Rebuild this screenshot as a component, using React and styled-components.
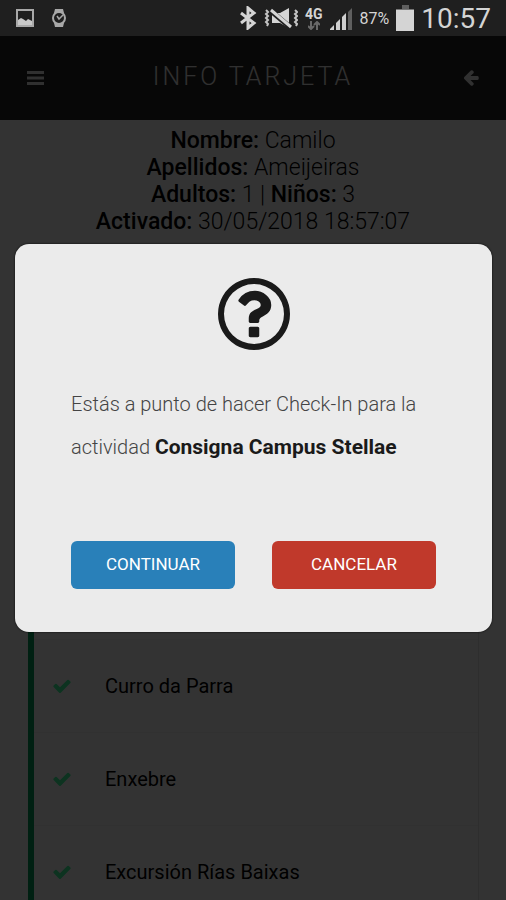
import React, { useState } from "react";
import styled, { createGlobalStyle } from "styled-components";

const activities = ["Curro da Parra", "Enxebre", "Excursión Rías Baixas"];

function StatusIcons() {
  return (
    <>
      {/* bluetooth */}
      <svg width="18" height="24" viewBox="0 0 18 24">
        <path
          d="M2 7 L15 17 L9 22 V2 L15 7 L2 17"
          fill="none"
          stroke="#d4d4d4"
          strokeWidth="3"
        />
      </svg>
      {/* vibrate + mute */}
      <svg width="34" height="22" viewBox="0 0 34 22">
        <path
          d="M2 3l2 2-2 2 2 2-2 2 2 2-2 2 2 2-1 2M31 3l2 2-2 2 2 2-2 2 2 2-2 2 2 2-1 2"
          fill="none"
          stroke="#c4c4c4"
          strokeWidth="2"
        />
        <path d="M8 6h8l9-5v20l-9-5H8z" fill="#d4d4d4" />
        <path d="M7 4l20 17" stroke="#1f1f1f" strokeWidth="5" />
        <path d="M7 3l20 17" stroke="#d4d4d4" strokeWidth="3" />
      </svg>
    </>
  );
}

function CheckIcon() {
  return (
    <svg width="20" height="20" viewBox="0 0 1792 1792" fill="currentColor">
      <path d="M1671 566q0 40-28 68l-724 724-136 136q-28 28-68 28t-68-28l-136-136-362-362q-28-28-28-68t28-68l136-136q28-28 68-28t68 28l294 295 656-657q28-28 68-28t68 28l136 136q28 28 28 68z" />
    </svg>
  );
}

function QuestionIcon() {
  return (
    <svg width="72" height="72" viewBox="128 128 1536 1536" fill="#1a1a1a">
      <path d="M1008 1200v160q0 14-9 23t-23 9h-160q-14 0-23-9t-9-23v-160q0-14 9-23t23-9h160q14 0 23 9t9 23zm256-496q0 50-15 90t-45.500 69-52 44-59.500 36q-32 18-46.500 28t-26 24-11.500 29v32q0 14-9 23t-23 9h-160q-14 0-23-9t-9-23v-68q0-35 10.500-64.500t24-47.500 39-35.500 41-25.500 44.500-21q53-25 75-43t22-49q0-42-43.500-71.500t-95.500-29.500q-56 0-95 27-29 20-80 83-9 12-25 12-11 0-19-6l-108-82q-10-7-12-20t5-23q122-192 349-192 129 0 238.500 89.500t109.500 214.500zm-368-448q-130 0-248.500 51t-204 136.500-136.500 204-51 248.500 51 248.500 136.500 204 204 136.500 248.500 51 248.500-51 204-136.500 136.500-204 51-248.500-51-248.500-136.500-204-204-136.500-248.500-51zm768 640q0 209-103 385.500t-279.500 279.500-385.500 103-385.500-103-279.500-279.500-103-385.500 103-385.500 279.500-279.500 385.500-103 385.500 103 279.500 279.500 103 385.500z" />
    </svg>
  );
}

function App() {
  const [open, setOpen] = useState(true);

  const onClose = () => setOpen(false);

  return (
    <Phone>
      <GlobalStyle />
      <StatusBar>
        <StatusLeft>
          <svg width="18" height="18" viewBox="0 0 18 18">
            <rect x="1" y="1" width="16" height="16" fill="none" stroke="#a8a8a8" strokeWidth="2" />
            <path d="M2 16v-5l3-2 2 1 3 2 2-2 4 2v4z" fill="#c8c8c8" />
          </svg>
          <svg width="16" height="20" viewBox="0 0 16 20">
            <path d="M4 1h8l1 4H3zM4 19h8l1-4H3z" fill="#a8a8a8" />
            <circle cx="8" cy="10" r="6" fill="#1f1f1f" stroke="#a8a8a8" strokeWidth="2" />
            <path d="M6 8l2 3 4-4" fill="none" stroke="#a8a8a8" strokeWidth="1.5" />
          </svg>
        </StatusLeft>
        <StatusRight>
          <StatusIcons />
          <Network>
            <span>4G</span>
            <svg width="12" height="9" viewBox="0 0 12 9">
              <path
                d="M3 0v8M0 5l3 3 3-3M9 9V1M6 4l3-3 3 3"
                fill="none"
                stroke="#6a6a6a"
                strokeWidth="2"
              />
            </svg>
          </Network>
          <svg width="23" height="23" viewBox="0 0 23 23">
            <path d="M0 23v-1l4-4v5zM6 16l4-4v11H6zM12 10l4-4v17h-4z" fill="#cfcfcf" />
            <path d="M18 5l4-4v22h-4z" fill="#5f5f5f" />
          </svg>
          <Percent>87%</Percent>
          <svg width="18" height="26" viewBox="0 0 18 26">
            <path d="M6 0h7v4H6z" fill="#5f5f5f" />
            <path d="M0 4h18v22H0z" fill="#d4d4d4" />
            <path d="M0 4h18v1H0z" fill="#777" />
          </svg>
          <Clock>10:57</Clock>
        </StatusRight>
      </StatusBar>

      <Screen>
        <Header>
          <IconButton type="button" aria-label="Menú">
            <svg width="18" height="16" viewBox="0 0 18 16" fill="currentColor">
              <path d="M1 1h17v3H1zM1 6.500h17v3H1zM1 12h17v3H1z" />
            </svg>
          </IconButton>
          <Title>INFO TARJETA</Title>
          <IconButton type="button" aria-label="Volver">
            <svg width="18" height="18" viewBox="0 64 1792 1792" fill="currentColor">
              <path d="M1664 896v128q0 53-32.500 90.500t-84.500 37.500h-704l293 294q38 36 38 90t-38 90l-75 76q-37 37-90 37-52 0-91-37l-651-652q-37-37-37-90 0-52 37-91l651-650q38-38 91-38 52 0 90 38l75 74q38 38 38 91t-38 91l-293 293h704q52 0 84.500 37.500t32.500 90.500z" />
            </svg>
          </IconButton>
        </Header>

        <Info>
          <p>
            <b>Nombre:</b> Camilo
          </p>
          <p>
            <b>Apellidos:</b> Ameijeiras
          </p>
          <p>
            <b>Adultos:</b> 1 | <b>Niños:</b> 3
          </p>
          <p>
            <b>Activado:</b> 30/05/2018 18:57:07
          </p>
        </Info>

        <List>
          {activities.map((name) => (
            <Item key={name}>
              <CheckIcon />
              <span>{name}</span>
            </Item>
          ))}
        </List>

        {open && (
          <Overlay>
            <Modal role="dialog" aria-modal="true">
              <QuestionIcon />
              <Message>
                Estás a punto de hacer Check-In para la actividad{" "}
                <b>Consigna Campus Stellae</b>
              </Message>
              <Actions>
                <ActionBtn type="button" color="#2980b9" onClick={onClose}>
                  CONTINUAR
                </ActionBtn>
                <ActionBtn type="button" color="#c0392b" onClick={onClose}>
                  CANCELAR
                </ActionBtn>
              </Actions>
            </Modal>
          </Overlay>
        )}
      </Screen>
    </Phone>
  );
}

const GlobalStyle = createGlobalStyle`
  * {
    box-sizing: border-box;
  }
  body {
    margin: 0;
    font-family: Roboto, "Liberation Sans", sans-serif;
  }
  svg {
    display: block;
    flex-shrink: 0;
  }
`;

const Phone = styled.div`
  display: flex;
  flex-direction: column;
  height: 100vh;
`;

const StatusBar = styled.div`
  display: flex;
  align-items: center;
  justify-content: space-between;
  height: 36px;
  padding: 0 15px 0 16px;
  background-color: #1f1f1f;
  color: #d4d4d4;
`;

const StatusLeft = styled.div`
  display: flex;
  align-items: center;
  gap: 17px;
`;

const StatusRight = styled.div`
  display: flex;
  align-items: center;
  gap: 7px;
`;

const Network = styled.div`
  display: flex;
  flex-direction: column;
  align-items: center;
  font-size: 14px;
  font-weight: bold;
  line-height: 14px;
`;

const Percent = styled.span`
  font-size: 16px;
`;

const Clock = styled.span`
  font-size: 28px;
`;

const Screen = styled.div`
  position: relative;
  flex: 1;
  overflow: hidden;
  background-color: white;
`;

const Header = styled.header`
  display: flex;
  align-items: center;
  justify-content: space-between;
  height: 84px;
  padding: 0 25px;
  background-color: #242424;
`;

const IconButton = styled.button`
  padding: 0 1px;
  border: none;
  background: none;
  color: #eee;
  cursor: pointer;
`;

const Title = styled.h1`
  margin: 0;
  padding-bottom: 3px;
  color: #eee;
  font-size: 25px;
  font-weight: 300;
  letter-spacing: 3px;
`;

const Info = styled.div`
  padding: 7px 0 34px;
  color: black;
  font-size: 23px;
  font-weight: 300;
  line-height: 27px;
  text-align: center;

  p {
    margin: 0;
  }
  b {
    font-weight: 500;
  }
`;

const List = styled.ul`
  margin: 0 27px 0 28px;
  padding: 370px 0 0;
  border-left: 6px solid #00a05a;
  border-right: 1px solid #e4e4e4;
  list-style: none;
`;

const Item = styled.li`
  display: flex;
  align-items: center;
  gap: 33px;
  height: 93px;
  padding-left: 18px;
  border-top: 1px solid #f6f6f6;
  color: #40ffa0;
  font-size: 20px;
  font-weight: 400;

  span {
    color: black;
  }
`;

const Overlay = styled.div`
  position: absolute;
  inset: 0;
  padding: 208px 14px 0 15px;
  background-color: rgba(0, 0, 0, 0.8);
`;

const Modal = styled.div`
  display: flex;
  flex-direction: column;
  align-items: center;
  padding: 34px 56px 43px;
  border-radius: 14px;
  background-color: #ebebeb;
  box-shadow: 0 0 2px black;
`;

const Message = styled.p`
  width: 100%;
  margin: 33px 0 72px;
  color: #444;
  font-size: 20px;
  font-weight: 300;
  line-height: 43px;

  b {
    color: #1a1a1a;
    font-size: 21px;
    font-weight: bold;
  }
`;

const Actions = styled.div`
  display: flex;
  gap: 37px;
  width: 100%;
`;

const ActionBtn = styled.button`
  flex: 1;
  height: 48px;
  padding: 0 0 2px;
  border: none;
  border-radius: 6px;
  background-color: ${(props) => props.color};
  color: white;
  font-family: inherit;
  font-size: 17px;
  cursor: pointer;
`;

export default App;
